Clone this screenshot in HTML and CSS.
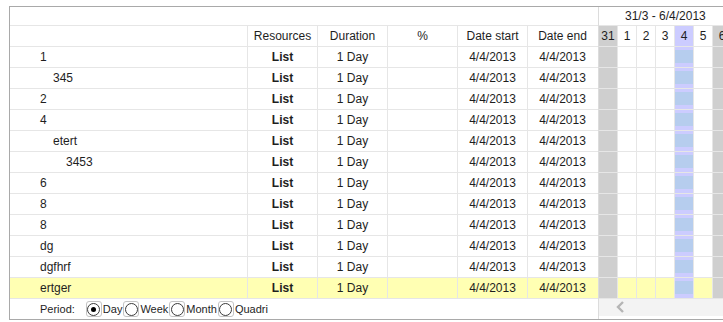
FILE: index.html
```html
<!DOCTYPE html>
<html lang="en">
<head>
    <meta charset="UTF-8">
    <title>Gantt</title>
    <link rel="stylesheet" href="styles.css">
</head>
<body>
    <div class="gantt">
        <div class="side">
            <div class="head-top"></div>
            <div class="row head">
                <div class="c name"></div>
                <div class="c">Resources</div>
                <div class="c">Duration</div>
                <div class="c">%</div>
                <div class="c">Date start</div>
                <div class="c">Date end</div>
            </div>
            <div class="row"><div class="c name">1</div><div class="c res">List</div><div class="c">1 Day</div><div class="c"></div><div class="c">4/4/2013</div><div class="c">4/4/2013</div></div>
            <div class="row"><div class="c name l1">345</div><div class="c res">List</div><div class="c">1 Day</div><div class="c"></div><div class="c">4/4/2013</div><div class="c">4/4/2013</div></div>
            <div class="row"><div class="c name">2</div><div class="c res">List</div><div class="c">1 Day</div><div class="c"></div><div class="c">4/4/2013</div><div class="c">4/4/2013</div></div>
            <div class="row"><div class="c name">4</div><div class="c res">List</div><div class="c">1 Day</div><div class="c"></div><div class="c">4/4/2013</div><div class="c">4/4/2013</div></div>
            <div class="row"><div class="c name l1">etert</div><div class="c res">List</div><div class="c">1 Day</div><div class="c"></div><div class="c">4/4/2013</div><div class="c">4/4/2013</div></div>
            <div class="row"><div class="c name l2">3453</div><div class="c res">List</div><div class="c">1 Day</div><div class="c"></div><div class="c">4/4/2013</div><div class="c">4/4/2013</div></div>
            <div class="row"><div class="c name">6</div><div class="c res">List</div><div class="c">1 Day</div><div class="c"></div><div class="c">4/4/2013</div><div class="c">4/4/2013</div></div>
            <div class="row"><div class="c name">8</div><div class="c res">List</div><div class="c">1 Day</div><div class="c"></div><div class="c">4/4/2013</div><div class="c">4/4/2013</div></div>
            <div class="row"><div class="c name">8</div><div class="c res">List</div><div class="c">1 Day</div><div class="c"></div><div class="c">4/4/2013</div><div class="c">4/4/2013</div></div>
            <div class="row"><div class="c name">dg</div><div class="c res">List</div><div class="c">1 Day</div><div class="c"></div><div class="c">4/4/2013</div><div class="c">4/4/2013</div></div>
            <div class="row"><div class="c name">dgfhrf</div><div class="c res">List</div><div class="c">1 Day</div><div class="c"></div><div class="c">4/4/2013</div><div class="c">4/4/2013</div></div>
            <div class="row selected"><div class="c name">ertger</div><div class="c res">List</div><div class="c">1 Day</div><div class="c"></div><div class="c">4/4/2013</div><div class="c">4/4/2013</div></div>
            <div class="period">
                <span class="period-label">Period:</span>
                <label class="opt"><span class="box"><input type="radio" name="period" checked></span>Day</label>
                <label class="opt"><span class="box"><input type="radio" name="period"></span>Week</label>
                <label class="opt"><span class="box"><input type="radio" name="period"></span>Month</label>
                <label class="opt"><span class="box"><input type="radio" name="period"></span>Quadri</label>
            </div>
        </div>

        <div class="chart">
            <div class="range">31/3 - 6/4/2013</div>
            <div class="drow days">
                <div class="d we">31</div><div class="d">1</div><div class="d">2</div><div class="d">3</div><div class="d today">4</div><div class="d">5</div><div class="d we">6</div>
            </div>
            <div class="drow"><div class="d we"></div><div class="d"></div><div class="d"></div><div class="d"></div><div class="d today"><span class="bar"></span></div><div class="d"></div><div class="d we"></div></div>
            <div class="drow"><div class="d we"></div><div class="d"></div><div class="d"></div><div class="d"></div><div class="d today"><span class="bar"></span></div><div class="d"></div><div class="d we"></div></div>
            <div class="drow"><div class="d we"></div><div class="d"></div><div class="d"></div><div class="d"></div><div class="d today"><span class="bar"></span></div><div class="d"></div><div class="d we"></div></div>
            <div class="drow"><div class="d we"></div><div class="d"></div><div class="d"></div><div class="d"></div><div class="d today"><span class="bar"></span></div><div class="d"></div><div class="d we"></div></div>
            <div class="drow"><div class="d we"></div><div class="d"></div><div class="d"></div><div class="d"></div><div class="d today"><span class="bar"></span></div><div class="d"></div><div class="d we"></div></div>
            <div class="drow"><div class="d we"></div><div class="d"></div><div class="d"></div><div class="d"></div><div class="d today"><span class="bar"></span></div><div class="d"></div><div class="d we"></div></div>
            <div class="drow"><div class="d we"></div><div class="d"></div><div class="d"></div><div class="d"></div><div class="d today"><span class="bar"></span></div><div class="d"></div><div class="d we"></div></div>
            <div class="drow"><div class="d we"></div><div class="d"></div><div class="d"></div><div class="d"></div><div class="d today"><span class="bar"></span></div><div class="d"></div><div class="d we"></div></div>
            <div class="drow"><div class="d we"></div><div class="d"></div><div class="d"></div><div class="d"></div><div class="d today"><span class="bar"></span></div><div class="d"></div><div class="d we"></div></div>
            <div class="drow"><div class="d we"></div><div class="d"></div><div class="d"></div><div class="d"></div><div class="d today"><span class="bar"></span></div><div class="d"></div><div class="d we"></div></div>
            <div class="drow"><div class="d we"></div><div class="d"></div><div class="d"></div><div class="d"></div><div class="d today"><span class="bar"></span></div><div class="d"></div><div class="d we"></div></div>
            <div class="drow selected"><div class="d we"></div><div class="d"></div><div class="d"></div><div class="d"></div><div class="d today"><span class="bar"></span></div><div class="d"></div><div class="d we"></div></div>
            <div class="scroll">
                <svg width="10" height="12" viewBox="0 0 10 12"><path d="M7 1 L2 6 L7 11" fill="none" stroke="#b5b5b5" stroke-width="2.4"/></svg>
            </div>
        </div>
    </div>
</body>
</html>
```

FILE: styles.css
```css
body {
    margin: 0;
    font-family: "Liberation Sans", Arial, sans-serif;
    font-size: 12px;
    color: #1e1e1e;
    background-color: #fff;
    overflow: hidden;
}
.gantt {
    display: flex;
    margin: 6px 0 0 9px;
    width: 800px;
    height: 314px;
    box-sizing: border-box;
    border: 1px solid #a9a9a9;
    border-right: none;
}
.side {
    width: 588px;
    flex-shrink: 0;
}
.head-top {
    height: 19px;
    box-sizing: border-box;
    border-bottom: 1px solid #e6e6e6;
}
.row {
    display: flex;
    height: 21px;
    box-sizing: border-box;
    border-bottom: 1px solid #e6e6e6;
}
.row .c {
    width: 70px;
    box-sizing: border-box;
    border-right: 1px solid #e6e6e6;
    text-align: center;
    line-height: 20px;
    white-space: nowrap;
}
.row .c:last-child {
    border-right: none;
    width: 69px;
}
.row .name {
    width: 238px;
    text-align: left;
    padding-left: 30px;
}
.head .name {
    border-right: 1px solid #e6e6e6;
}
.row .l1 {
    padding-left: 43px;
}
.row .l2 {
    padding-left: 56px;
}
.row .res {
    font-weight: bold;
}
.selected {
    background-color: #ffffb3;
}
.period {
    display: flex;
    align-items: center;
    height: 20px;
    padding-left: 30px;
    font-size: 11px;
}
.period-label {
    margin-right: 11px;
}
.opt {
    display: flex;
    align-items: center;
    margin-right: 1px;
}
.box {
    display: flex;
    align-items: center;
    justify-content: center;
    width: 16px;
    height: 16px;
    box-sizing: border-box;
    border: 1px solid #c4c4c4;
    border-radius: 3px;
    margin-right: 1px;
}
.box input {
    appearance: none;
    -webkit-appearance: none;
    margin: 0;
    width: 13px;
    height: 13px;
    border: 1px solid #3a3a3a;
    border-radius: 50%;
    background-color: #fff;
    position: relative;
}
.box input:checked::after {
    content: "";
    position: absolute;
    left: 3px;
    top: 3px;
    width: 5px;
    height: 5px;
    border-radius: 50%;
    background-color: #000;
}
.chart {
    flex: 1;
    border-left: 1px solid #dcdcdc;
}
.range {
    height: 19px;
    box-sizing: border-box;
    border-bottom: 1px solid #e6e6e6;
    line-height: 18px;
    padding-left: 26px;
}
.drow {
    display: flex;
    height: 21px;
    box-sizing: border-box;
    border-bottom: 1px solid #e6e6e6;
}
.d {
    width: 19px;
    flex-shrink: 0;
    box-sizing: border-box;
    border-right: 1px solid #e6e6e6;
    text-align: center;
    line-height: 20px;
    position: relative;
}
.days .d {
    background-color: #fff;
}
.d.we,
.days .d.we {
    background-color: #cfcfcf;
}
.d.today,
.days .d.today {
    background-color: #ccccff;
}
.bar {
    position: absolute;
    left: 0;
    right: 0;
    top: 3px;
    bottom: 4px;
    background-color: #b6cdee;
}
.scroll {
    height: 17px;
    background-color: #f3f3f3;
    padding-left: 17px;
    padding-top: 2px;
    box-sizing: border-box;
}
```
